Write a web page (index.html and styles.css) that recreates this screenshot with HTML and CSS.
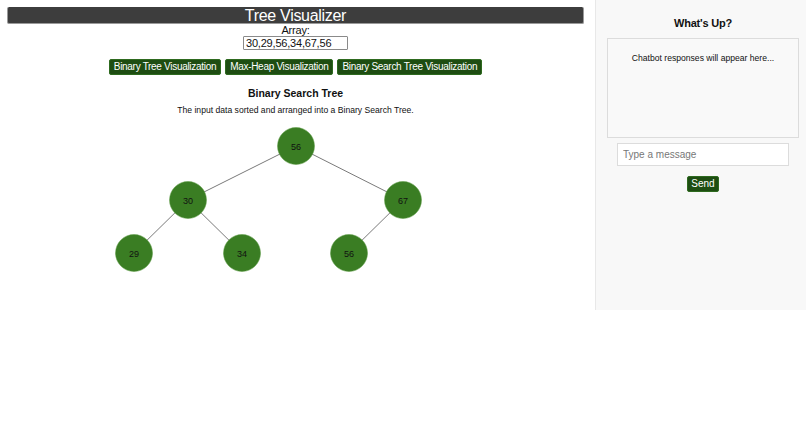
FILE: index.html
```html
<!DOCTYPE html>
<html>
<head>
<meta charset="utf-8">
<link rel="stylesheet" href="styles.css">
</head>
<body>
<div class="app">
  <div class="main">
    <h1 class="title">Tree Visualizer</h1>
    <label class="array-label" for="arr">Array:</label>
    <input id="arr" class="array-input" type="text" value="30,29,56,34,67,56">
    <div class="buttons">
      <button class="btn">Binary Tree Visualization</button>
      <button class="btn">Max-Heap Visualization</button>
      <button class="btn">Binary Search Tree Visualization</button>
    </div>
    <h2 class="tree-heading">Binary Search Tree</h2>
    <p class="tree-desc">The input data sorted and arranged into a Binary Search Tree.</p>
    <svg class="tree" width="577" height="160" viewBox="0 0 577 160">
      <g class="edges">
        <line x1="289" y1="26" x2="181" y2="80"/>
        <line x1="289" y1="26" x2="396" y2="80"/>
        <line x1="181" y1="80" x2="127" y2="133"/>
        <line x1="181" y1="80" x2="235" y2="133"/>
        <line x1="396" y1="80" x2="342" y2="133"/>
      </g>
      <g class="nodes">
        <circle cx="289" cy="26" r="18.5"/><text x="289" y="29.5">56</text>
        <circle cx="181" cy="80" r="18.5"/><text x="181" y="83.5">30</text>
        <circle cx="396" cy="80" r="18.5"/><text x="396" y="83.5">67</text>
        <circle cx="127" cy="133" r="18.5"/><text x="127" y="136.5">29</text>
        <circle cx="235" cy="133" r="18.5"/><text x="235" y="136.5">34</text>
        <circle cx="342" cy="133" r="18.5"/><text x="342" y="136.5">56</text>
      </g>
    </svg>
  </div>
  <aside class="chat">
    <h3 class="chat-title">What's Up?</h3>
    <div class="chat-box">Chatbot responses will appear here...</div>
    <input class="chat-input" type="text" placeholder="Type a message">
    <button class="send">Send</button>
  </aside>
</div>
</body>
</html>
```
FILE: styles.css
```css
html, body {
  margin: 0;
  padding: 0;
  background: #ffffff;
  font-family: "Liberation Sans", Arial, sans-serif;
  color: #111;
}
.app {
  display: flex;
  align-items: flex-start;
}
.main {
  flex: 1;
  padding: 7px 11px 0 7px;
  display: flex;
  flex-direction: column;
  align-items: center;
  text-align: center;
}
.title {
  align-self: stretch;
  margin: 0;
  height: 16px;
  line-height: 17px;
  background: #3d3d3d;
  color: #fff;
  font-size: 16px;
  letter-spacing: -0.3px;
  font-weight: normal;
  border: 1px solid #9a9a9a;
  border-radius: 2px;
  border-top: none;
}
.array-label {
  font-size: 11px;
  line-height: 12px;
  letter-spacing: -0.2px;
  margin-top: 0;
}
.array-input {
  box-sizing: border-box;
  width: 105px;
  height: 14px;
  margin: 0;
  padding: 0 2px;
  font-family: "Liberation Sans", Arial, sans-serif;
  font-size: 11px;
  letter-spacing: -0.2px;
  border: 1px solid #8a8a8a;
  border-radius: 1px;
  color: #111;
}
.buttons {
  display: flex;
  gap: 4px;
  margin-top: 9px;
}
.btn, .send {
  background: #1e4d12;
  color: #fff;
  border: 1px solid #2e6a1f;
  border-radius: 2px;
  font-family: "Liberation Sans", Arial, sans-serif;
  font-size: 10px;
  letter-spacing: -0.3px;
  height: 16px;
  line-height: 14px;
  padding: 0 4px;
  margin: 0;
  cursor: pointer;
}
.tree-heading {
  margin: 12px 0 0;
  font-size: 10.5px;
  line-height: 13px;
  font-weight: bold;
}
.tree-desc {
  margin: 5px 0 0;
  font-size: 8.6px;
  line-height: 10px;
}
.tree {
  display: block;
  align-self: stretch;
  margin-top: 5px;
}
.edges line {
  stroke: #7a7a7a;
  stroke-width: 1;
}
.nodes circle {
  fill: #3a7d23;
  stroke: #5a9a42;
  stroke-width: 0.5;
}
.nodes text {
  font-family: "Liberation Sans", Arial, sans-serif;
  font-size: 9px;
  fill: #111;
  text-anchor: middle;
}
.chat {
  box-sizing: border-box;
  width: 211px;
  height: 310px;
  background: #f8f8f8;
  border-left: 1px solid #e8e8e8;
  padding: 16px 7px 0 11px;
  display: flex;
  flex-direction: column;
  align-items: center;
}
.chat-title {
  margin: 0;
  font-size: 11px;
  line-height: 14px;
  font-weight: bold;
  letter-spacing: -0.2px;
}
.chat-box {
  box-sizing: border-box;
  align-self: stretch;
  height: 100px;
  margin-top: 8px;
  border: 1px solid #dcdcdc;
  background: #f9f9f9;
  font-size: 8.6px;
  line-height: 11px;
  padding-top: 14px;
  text-align: center;
  color: #111;
}
.chat-input {
  box-sizing: border-box;
  width: 172px;
  height: 23px;
  margin: 5px 0 0;
  padding: 0 5px;
  border: 1px solid #dcdcdc;
  background: #fff;
  font-family: "Liberation Sans", Arial, sans-serif;
  font-size: 10px;
}
.chat-input::placeholder {
  color: #777;
}
.send {
  margin-top: 10px;
  padding: 0 3px;
  height: 16px;
  font-size: 10px;
  letter-spacing: 0;
}
```
